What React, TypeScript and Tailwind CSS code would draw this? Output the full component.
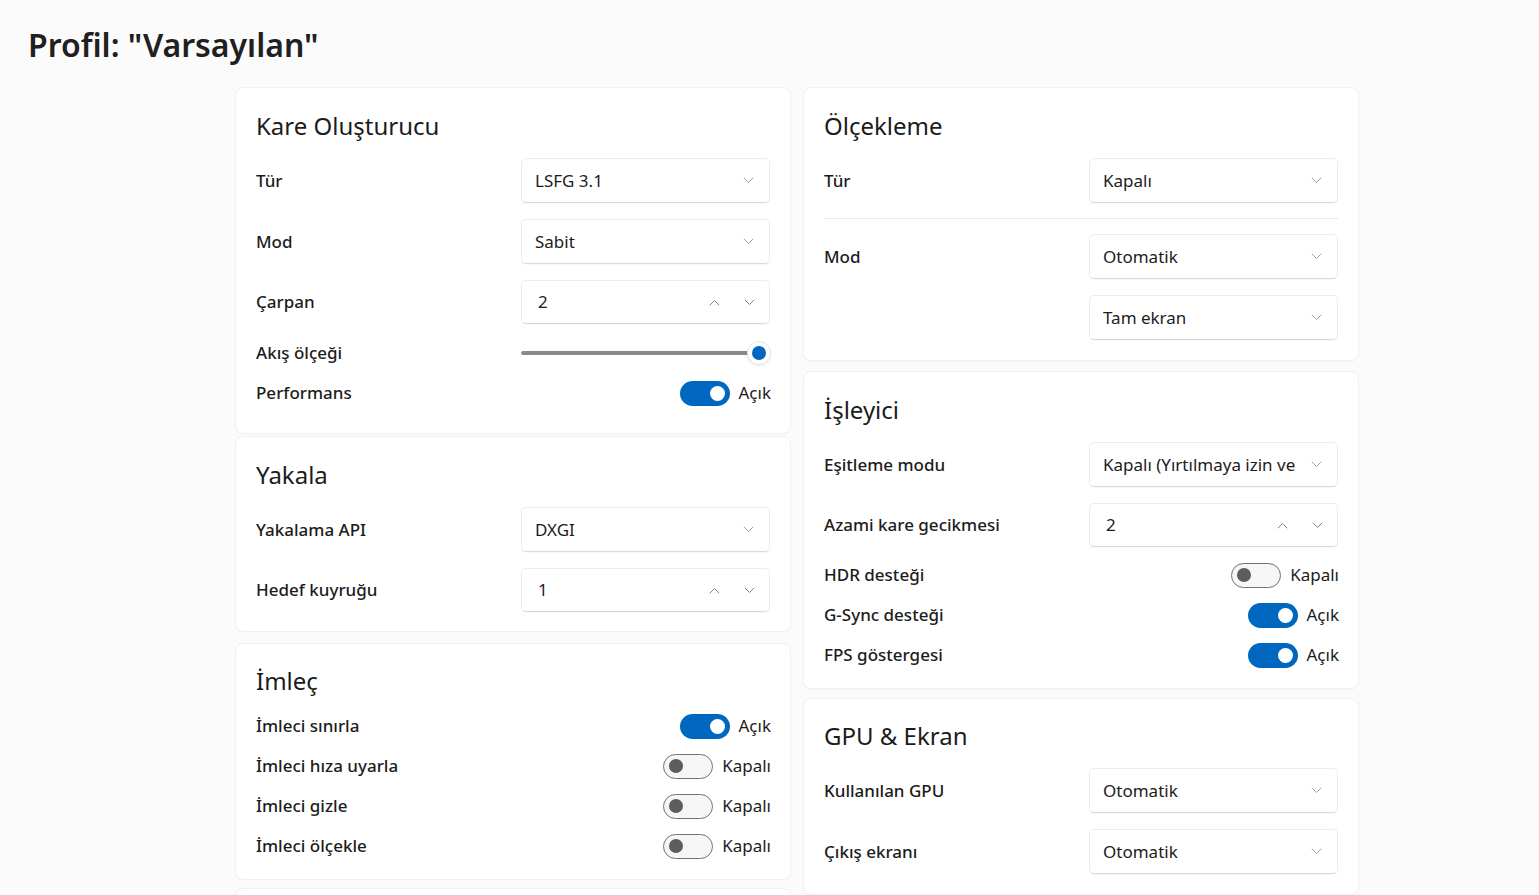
import React from "react";

const FONT = { fontFamily: '"Noto Sans", "Open Sans", Arial, sans-serif' };

function Chevron({ up = false, color = "#a3a3a3" }: { up?: boolean; color?: string }) {
  return (
    <svg width="11" height="7" viewBox="0 0 11 7" fill="none">
      <path
        d={up ? "M1 6L5.5 1.5L10 6" : "M1 1L5.5 5.5L10 1"}
        stroke={color}
        strokeWidth="1"
        strokeLinecap="round"
        strokeLinejoin="round"
      />
    </svg>
  );
}

function Dropdown({ value }: { value: string }) {
  return (
    <div className="w-[249px] h-[45px] flex items-center justify-between pl-[13px] pr-[15px] bg-white border border-[#ececec] border-b-[#d9d9d9] rounded-[5px] shadow-[0_1px_1px_rgba(0,0,0,0.03)]">
      <span className="text-[17px] text-[#1c1c1c] whitespace-nowrap overflow-hidden">{value}</span>
      <span className="shrink-0 ml-3 flex items-center">
        <Chevron />
      </span>
    </div>
  );
}

function NumberBox({ value }: { value: string }) {
  return (
    <div className="w-[249px] h-[44px] flex items-center justify-between pl-[16px] pr-[14px] bg-white border border-[#ececec] border-b-[#d9d9d9] rounded-[5px] shadow-[0_1px_1px_rgba(0,0,0,0.03)]">
      <span className="text-[17px] text-[#1c1c1c]">{value}</span>
      <span className="flex items-center gap-[24px]">
        <Chevron up color="#808080" />
        <Chevron color="#808080" />
      </span>
    </div>
  );
}

function Toggle({ on }: { on: boolean }) {
  const label = on ? "Açık" : "Kapalı";
  return (
    <div className="flex items-center gap-[9px] -mr-[1px]">
      {on ? (
        <div className="w-[50px] h-[25px] rounded-full bg-[#0067c0] flex items-center justify-end pr-[5px]">
          <div className="w-[15px] h-[15px] rounded-full bg-white" />
        </div>
      ) : (
        <div className="w-[50px] h-[25px] rounded-full bg-[#f6f6f6] border border-[#727272] flex items-center pl-[5px]">
          <div className="w-[14px] h-[14px] rounded-full bg-[#5c5c5c]" />
        </div>
      )}
      <span className="text-[17px] text-[#1c1c1c]">{label}</span>
    </div>
  );
}

function Label({ children }: { children: React.ReactNode }) {
  return <span className="text-[17px] font-medium text-[#1c1c1c]">{children}</span>;
}

function Card({
  title,
  className = "",
  children,
}: {
  title: string;
  className?: string;
  children?: React.ReactNode;
}) {
  return (
    <section
      className={`bg-white border border-[#f0f0f0] rounded-[8px] px-[20px] shadow-[0_1px_2px_rgba(0,0,0,0.02)] ${className}`}
    >
      <h2 className="h-[32px] leading-[32px] text-[24px] text-[#1c1c1c]">{title}</h2>
      {children}
    </section>
  );
}

function Row({
  label,
  h,
  className = "",
  children,
}: {
  label: string;
  h: string;
  className?: string;
  children: React.ReactNode;
}) {
  return (
    <div className={`flex items-center justify-between ${h} ${className}`}>
      <Label>{label}</Label>
      {children}
    </div>
  );
}

function Slider() {
  return (
    <div className="relative w-[249px] h-[24px] flex items-center">
      <div className="w-[238px] h-[4px] rounded-full bg-[#8a8a8a]" />
      {/* thumb */}
      <div className="absolute left-[226px] top-0 w-[24px] h-[24px] rounded-full bg-white border border-[#e6e6e6] flex items-center justify-center shadow-[0_1px_2px_rgba(0,0,0,0.08)]">
        <div className="w-[14px] h-[14px] rounded-full bg-[#0067c0]" />
      </div>
    </div>
  );
}

export default function App() {
  return (
    <div className="min-h-screen bg-[#fbfbfb] text-[#1c1c1c]" style={FONT}>
      <div className="pl-[28px] pt-[25px] h-[65px]">
        <h1 className="text-[32px] leading-[40px] font-semibold text-[#202020]">Profil: "Varsayılan"</h1>
      </div>

      <div className="flex gap-[12px] pl-[235px] pt-[22px]">
        {/* left column */}
        <div className="w-[556px] flex flex-col">
          <Card title="Kare Oluşturucu" className="pt-[22px] pb-[20px]">
            <Row label="Tür" h="h-[45px]" className="mt-[16px]">
              <Dropdown value="LSFG 3.1" />
            </Row>
            <Row label="Mod" h="h-[45px]" className="mt-[16px]">
              <Dropdown value="Sabit" />
            </Row>
            <Row label="Çarpan" h="h-[44px]" className="mt-[16px]">
              <NumberBox value="2" />
            </Row>
            <Row label="Akış ölçeği" h="h-[41px]" className="mt-[8px]">
              <Slider />
            </Row>
            <Row label="Performans" h="h-[40px]">
              <Toggle on />
            </Row>
          </Card>

          <Card title="Yakala" className="mt-[2px] pt-[22px] pb-[19px]">
            <Row label="Yakalama API" h="h-[45px]" className="mt-[16px]">
              <Dropdown value="DXGI" />
            </Row>
            <Row label="Hedef kuyruğu" h="h-[44px]" className="mt-[16px]">
              <NumberBox value="1" />
            </Row>
          </Card>

          <Card title="İmleç" className="mt-[11px] pt-[21px] pb-[13px]">
            <div className="mt-[9px]">
              <Row label="İmleci sınırla" h="h-[40px]">
                <Toggle on />
              </Row>
              <Row label="İmleci hıza uyarla" h="h-[40px]">
                <Toggle on={false} />
              </Row>
              <Row label="İmleci gizle" h="h-[40px]">
                <Toggle on={false} />
              </Row>
              <Row label="İmleci ölçekle" h="h-[40px]">
                <Toggle on={false} />
              </Row>
            </div>
          </Card>

          <Card title="" className="mt-[8px] pt-[22px] h-[80px]" />
        </div>

        {/* right column */}
        <div className="w-[556px] flex flex-col">
          <Card title="Ölçekleme" className="pt-[22px] pb-[20px]">
            <Row label="Tür" h="h-[45px]" className="mt-[16px]">
              <Dropdown value="Kapalı" />
            </Row>
            <div className="mt-[15px] h-px bg-[#e8e8e8]" />
            <div className="mt-[15px] flex justify-between">
              <div className="h-[45px] flex items-center">
                <Label>Mod</Label>
              </div>
              <div className="flex flex-col gap-[16px]">
                <Dropdown value="Otomatik" />
                <Dropdown value="Tam ekran" />
              </div>
            </div>
          </Card>

          <Card title="İşleyici" className="mt-[10px] pt-[22px] pb-[13px]">
            <Row label="Eşitleme modu" h="h-[45px]" className="mt-[16px]">
              <Dropdown value="Kapalı (Yırtılmaya izin ve" />
            </Row>
            <Row label="Azami kare gecikmesi" h="h-[44px]" className="mt-[16px]">
              <NumberBox value="2" />
            </Row>
            <div className="mt-[8px]">
              <Row label="HDR desteği" h="h-[40px]">
                <Toggle on={false} />
              </Row>
              <Row label="G-Sync desteği" h="h-[40px]">
                <Toggle on />
              </Row>
              <Row label="FPS göstergesi" h="h-[40px]">
                <Toggle on />
              </Row>
            </div>
          </Card>

          <Card title="GPU & Ekran" className="mt-[9px] pt-[21px] pb-[20px]">
            <Row label="Kullanılan GPU" h="h-[45px]" className="mt-[16px]">
              <Dropdown value="Otomatik" />
            </Row>
            <Row label="Çıkış ekranı" h="h-[45px]" className="mt-[16px]">
              <Dropdown value="Otomatik" />
            </Row>
          </Card>
        </div>
      </div>
    </div>
  );
}
